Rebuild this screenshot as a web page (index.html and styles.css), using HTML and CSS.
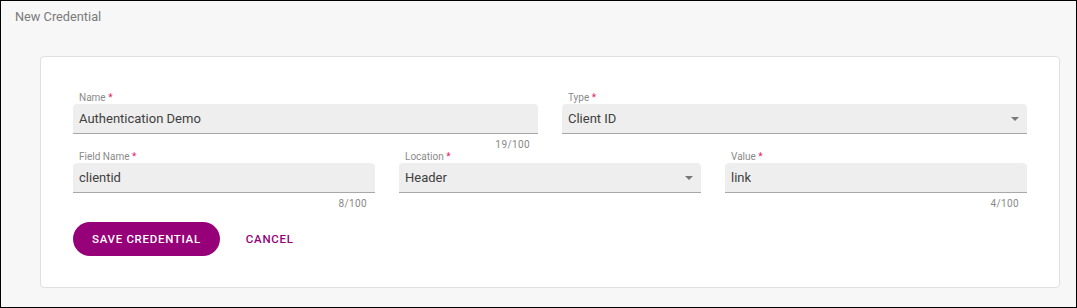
FILE: index.html
```html
<!DOCTYPE html>
<html lang="en">
<head>
  <meta charset="UTF-8" />
  <meta name="viewport" content="width=device-width, initial-scale=1.0" />
  <title>New Credential</title>
  <link rel="stylesheet" href="styles.css">
</head>
<body>
  <div class="frame">
    <div class="page-title">New Credential</div>

    <div class="card">
      <form class="cred-form">
        <div class="row row-2">
          <div class="field">
            <label class="field-label">Name <span class="req">*</span></label>
            <div class="field-box">
              <input type="text" value="Authentication Demo" />
            </div>
            <div class="counter">19/100</div>
          </div>
          <div class="field">
            <label class="field-label">Type <span class="req">*</span></label>
            <div class="field-box select">
              <span class="select-value">Client ID</span>
              <span class="arrow"></span>
            </div>
          </div>
        </div>

        <div class="row row-3">
          <div class="field">
            <label class="field-label">Field Name <span class="req">*</span></label>
            <div class="field-box">
              <input type="text" value="clientid" />
            </div>
            <div class="counter">8/100</div>
          </div>
          <div class="field">
            <label class="field-label">Location <span class="req">*</span></label>
            <div class="field-box select">
              <span class="select-value">Header</span>
              <span class="arrow"></span>
            </div>
          </div>
          <div class="field">
            <label class="field-label">Value <span class="req">*</span></label>
            <div class="field-box">
              <input type="text" value="link" />
            </div>
            <div class="counter">4/100</div>
          </div>
        </div>

        <div class="actions">
          <button type="submit" class="save-btn">Save Credential</button>
          <button type="button" class="cancel-btn">Cancel</button>
        </div>
      </form>
    </div>
  </div>
</body>
</html>
```

FILE: styles.css
```css
body {
  margin: 0;
  padding: 0;
  font-family: Roboto, "Noto Sans", sans-serif;
}
.frame {
  height: 308px;
  box-sizing: border-box;
  border: 1px solid #000;
  background: #f7f7f7;
  overflow: hidden;
}
.page-title {
  padding: 8px 14px 0;
  font-size: 12.75px;
  line-height: 16px;
  color: #7a7a7a;
}
.card {
  margin: 31px 16px 0 39px;
  background: #fff;
  border: 1px solid #e0e0e0;
  border-radius: 4px;
  padding: 35px 32px 31px 32px;
}
.row {
  display: grid;
  column-gap: 24px;
}
.row-2 {
  grid-template-columns: 1fr 1fr;
}
.row-3 {
  grid-template-columns: 1fr 1fr 1fr;
}
.field {
  height: 59px;
}
.field-label {
  display: block;
  padding-left: 6px;
  font-size: 10px;
  line-height: 12px;
  color: #8a8a8a;
}
.req {
  color: #e91e63;
}
.field-box {
  position: relative;
  height: 30px;
  box-sizing: border-box;
  background: #eeeeee;
  border-bottom: 1px solid #a8a8a8;
  border-radius: 4px 4px 0 0;
}
.field-box input {
  width: 100%;
  height: 29px;
  box-sizing: border-box;
  border: none;
  outline: none;
  background: transparent;
  padding: 0 6px;
  font-family: inherit;
  font-size: 13px;
  color: #404040;
}
.select-value {
  display: block;
  padding: 0 6px;
  font-size: 13px;
  line-height: 29px;
  color: #404040;
}
.arrow {
  position: absolute;
  right: 8px;
  top: 13px;
  width: 0;
  height: 0;
  border-left: 4px solid transparent;
  border-right: 4px solid transparent;
  border-top: 4px solid #777;
}
.counter {
  margin-top: 5px;
  padding-right: 8px;
  text-align: right;
  font-size: 10px;
  line-height: 12px;
  letter-spacing: 0.4px;
  color: #888;
}
.actions {
  display: flex;
  align-items: center;
  gap: 10px;
  margin-top: 12px;
}
.save-btn {
  height: 34px;
  padding: 0 19px;
  border: none;
  border-radius: 17px;
  background: #960079;
  color: #fff;
  font-family: inherit;
  font-size: 11.5px;
  font-weight: 500;
  letter-spacing: 0.7px;
  text-transform: uppercase;
  cursor: pointer;
}
.cancel-btn {
  height: 34px;
  padding: 0 16px;
  border: none;
  background: transparent;
  color: #960079;
  font-family: inherit;
  font-size: 11.5px;
  font-weight: 500;
  letter-spacing: 0.7px;
  text-transform: uppercase;
  cursor: pointer;
}
```
